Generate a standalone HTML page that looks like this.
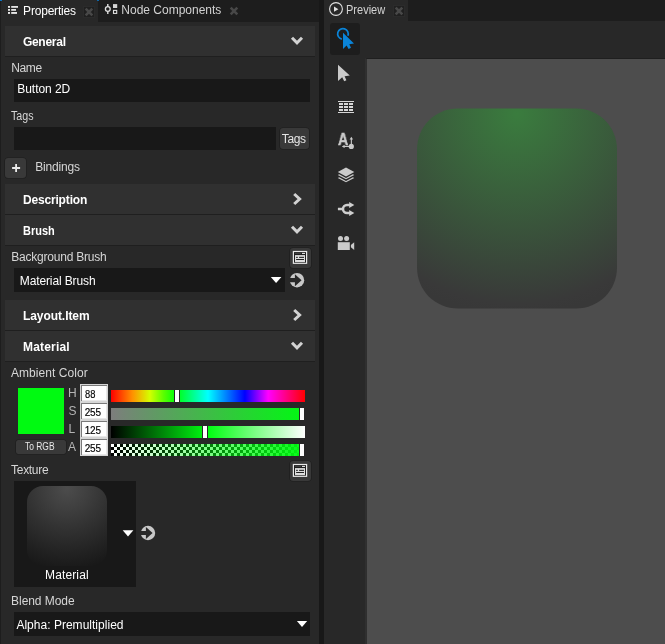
<!DOCTYPE html>
<html><head><meta charset="utf-8"><title>Properties</title>
<style>
html,body{margin:0;padding:0}
body{width:665px;height:644px;overflow:hidden;background:#282828;position:relative;font-family:"Liberation Sans",sans-serif}
.a{position:absolute}
.t{position:absolute;white-space:pre;font-family:"Liberation Sans",sans-serif}
.hdr{position:absolute;left:5px;width:310px;height:30px;background:#303030}
.ln{position:absolute;left:5px;width:310px;height:1px;background:#1f1f1f}
.inp{position:absolute;background:#181818}
.btn{position:absolute;background:#393939;border-radius:3px;box-shadow:0 0 0 0.6px rgba(20,20,20,.55)}
.num{position:absolute;left:80px;width:28px;height:18px;box-sizing:border-box;background:#fff;border:1px solid #d6d6d6;box-shadow:inset 1px 1px 0 #7a7a7a, inset -1px -1px 0 #e8e8e8}
.bar{position:absolute;left:111px;width:194px;height:12px}
.th{position:absolute;width:4px;height:12px;background:#fff;border-left:1px solid #282828;border-right:1px solid #282828}
svg{position:absolute;left:0;top:0}
.n{-webkit-text-stroke:0.15px #000}

</style></head>
<body>
<!-- left panel -->
<div class="a" style="left:0;top:0;width:319px;height:22px;background:#1d1d1d"></div>
<div class="a" style="left:0;top:0;width:98px;height:22px;background:#282828"></div>
<div class="a" style="left:0;top:0;width:1px;height:644px;background:#1d1d1d"></div>
<div class="a" style="left:84.1px;top:7px;width:10px;height:9.7px;background:#202020;box-shadow:0 0 0 1px #2b2b2b"></div>
<div class="a" style="left:0;top:0;width:2.2px;height:0.8px;background:#0b72c0"></div>
<div class="a" style="left:97.4px;top:0;width:1.7px;height:1px;background:#0b72c0;opacity:.85"></div>
<!-- divider -->
<div class="a" style="left:319px;top:0;width:5px;height:644px;background:#181818"></div>
<!-- preview panel -->
<div class="a" style="left:324px;top:0;width:341px;height:21px;background:#1d1d1d"></div>
<div class="a" style="left:324px;top:0;width:84px;height:21px;background:#282828"></div>
<div class="a" style="left:394.1px;top:6px;width:10px;height:9.7px;background:#202020;box-shadow:0 0 0 1px #2b2b2b"></div>
<div class="a" style="left:330px;top:23px;width:30px;height:32px;background:#1d1d1d;border-radius:3px"></div>
<div class="a" style="left:365px;top:58px;width:300px;height:586px;background:#4d4d4d;border-left:2px solid #2f2f2f;border-top:1px solid #1f1f1f;box-sizing:border-box"></div>

<!-- section headers -->
<div class="hdr" style="top:26px"></div><div class="ln" style="top:56px"></div>
<div class="hdr" style="top:184px"></div><div class="ln" style="top:214px"></div>
<div class="hdr" style="top:215px"></div><div class="ln" style="top:245px"></div>
<div class="hdr" style="top:300px"></div><div class="ln" style="top:330px"></div>
<div class="hdr" style="top:331px"></div><div class="ln" style="top:361px"></div>

<!-- general -->
<div class="inp" style="left:14px;top:79px;width:296px;height:23px"></div>
<div class="inp" style="left:14px;top:127px;width:262px;height:23px"></div>
<div class="btn" style="left:280px;top:127.9px;width:29.1px;height:21.5px"></div>
<div class="btn" style="left:5.4px;top:157.7px;width:21px;height:20.7px"></div>

<!-- brush -->
<div class="btn" style="left:289.8px;top:248px;width:21.4px;height:20px"></div>
<div class="inp" style="left:14px;top:268px;width:271px;height:24px"></div>

<!-- material -->
<div class="a" style="left:18px;top:388px;width:46px;height:46px;background:#00fa11"></div>
<div class="btn" style="left:15.8px;top:439.8px;width:50.3px;height:14.2px;border-radius:2.5px"></div>
<div class="num" style="top:384px"></div>
<div class="num" style="top:402px"></div>
<div class="num" style="top:420px"></div>
<div class="num" style="top:438px"></div>
<div class="bar" style="top:390px;background:linear-gradient(to right,#f00 0%,#ff9000 11%,#d4ff00 20%,#5cff00 27%,#00ff0c 33.5%,#0ff 50%,#00f 69%,#f0f 81%,#f00 100%)"></div>
<div class="bar" style="top:408px;background:linear-gradient(to right,#7d7d7d,#00fa11)"></div>
<div class="bar" style="top:426px;background:linear-gradient(to right,#000 0%,#00ff11 50%,#fff 100%)"></div>
<div class="bar" style="top:444px;background:linear-gradient(to right,rgba(0,250,17,0),rgba(0,250,17,1)),conic-gradient(#000 25%,#fff 0 50%,#000 0 75%,#fff 0) 0 0/6px 6px"></div>
<div class="th" style="left:174px;top:390px"></div>
<div class="th" style="left:299px;top:408px"></div>
<div class="th" style="left:202px;top:426px"></div>
<div class="th" style="left:299px;top:444px"></div>

<!-- texture -->
<div class="btn" style="left:289.8px;top:460.8px;width:21.4px;height:20.4px"></div>
<div class="inp" style="left:14px;top:481px;width:122px;height:106px"></div>
<div class="a" style="left:27px;top:486px;width:80px;height:80px;border-radius:16px;background:radial-gradient(circle 84px at 50% 3%, #4c4c4c 0%, #3f3f3f 25%, #313131 50%, #222222 78%, #171717 100%)"></div>
<div class="inp" style="left:14px;top:612px;width:296px;height:24px"></div>

<span id="bigA" class="t" style="left:337.9px;top:129px;font-size:17px;line-height:22px;font-weight:700;color:#cccccc;will-change:transform;transform:scaleX(0.83);transform-origin:0 0;-webkit-text-stroke:0.5px #cccccc">A</span>

<svg width="665" height="644" viewBox="0 0 665 644">
<defs><radialGradient id="bg" gradientUnits="userSpaceOnUse" cx="517" cy="114" r="200">
<stop offset="0" stop-color="#3a7c3e"/><stop offset="0.95" stop-color="#393939"/><stop offset="1" stop-color="#383838"/></radialGradient></defs>
<path d="M417 149.6C417 126.6 435.0 108.6 458.0 108.6H576.0C599.0 108.6 617 126.6 617 149.6V267.6C617 290.6 599.0 308.6 576.0 308.6H458.0C435.0 308.6 417 290.6 417 267.6Z" fill="url(#bg)"/>
<!-- properties tab icon -->
<g fill="#e6e6e6">
<rect x="8" y="6" width="2" height="1.8"/><rect x="11.2" y="6" width="6.8" height="1.8"/>
<rect x="8" y="9" width="2" height="1.8"/><rect x="11.2" y="9" width="4.8" height="1.8"/>
<rect x="8" y="12" width="2" height="1.9"/><rect x="11.2" y="12" width="5.8" height="1.9"/>
</g>
<!-- close X's -->
<g stroke="#484848" stroke-width="2.6" fill="none">
<path d="M85.7 8.7L92.3 15.3M92.3 8.7L85.7 15.3"/>
<path d="M230.7 7.7L237.3 14.3M237.3 7.7L230.7 14.3"/>
<path d="M395.7 7.7L402.3 14.3M402.3 7.7L395.7 14.3"/>
</g>
<!-- node components icon -->
<g fill="none" stroke="#e0e0e0">
<circle cx="107.8" cy="9" r="2.4" stroke-width="1.3"/>
<path d="M107.8 4.1V6.4M107.8 11.6V13.9" stroke-width="1.4"/>
<rect x="113.5" y="10.4" width="3.2" height="3" stroke-width="1.1"/>
</g>
<rect x="113" y="4.1" width="4.2" height="3.9" fill="#d4d4d4"/>
<!-- preview play icon -->
<circle cx="336" cy="9" r="6.4" fill="none" stroke="#e0e0e0" stroke-width="1.1"/>
<path d="M334 6.6L338.4 9.2L334 11.8Z" fill="#e0e0e0"/>
<!-- toolbar: interact tool (blue) -->
<path d="M341.8 39.1A5.3 5.3 0 1 1 347.9 35.8" fill="none" stroke="#0a84d8" stroke-width="1.7"/>
<path d="M343 32.8L354 43.6L349.3 44.3L351 47.8L348.6 48.9L346.6 45.4L343 49Z" fill="#0a84d8"/>
<!-- toolbar: arrow -->
<path d="M338 64.8L349.8 75.5L344.6 76.2L346.4 80.2L344.2 81.2L342.2 77.2L338 81Z" fill="#cacaca"/>
<!-- toolbar: grid -->
<g fill="#d6d6d6">
<rect x="338" y="101" width="16" height="1"/><rect x="338" y="112" width="16" height="1"/>
<rect x="339" y="103" width="4" height="2"/><rect x="344" y="103" width="4" height="2"/><rect x="349" y="103" width="4" height="2"/>
<rect x="339" y="106" width="4" height="2"/><rect x="344" y="106" width="4" height="2"/><rect x="349" y="106" width="4" height="2"/>
<rect x="339" y="109" width="4" height="2"/><rect x="344" y="109" width="4" height="2"/><rect x="349" y="109" width="4" height="2"/>
</g>
<!-- toolbar: A with arrows -->

<g fill="#cacaca">
<circle cx="351.3" cy="146.4" r="2.6"/>
<rect x="350.8" y="139" width="1.1" height="6"/>
<path d="M351.35 136.8L353.1 139.5H349.6Z"/>
<rect x="344" y="145.9" width="6" height="1.1"/>
<path d="M341.8 146.45L344.6 144.8V148.1Z"/>
</g>
<!-- toolbar: layers -->
<g fill="#cacaca">
<path d="M346 167.6L354.3 172L346 176.5L337.8 172Z"/>
<path d="M337.8 174.9L339.2 174.2L346 177.9L352.8 174.2L354.3 174.9L346 179.3Z"/>
<path d="M337.8 177.9L339.2 177.2L346 180.9L352.8 177.2L354.3 177.9L346 182.3Z"/>
</g>
<!-- toolbar: split arrows -->
<g fill="none" stroke="#cecece" stroke-width="2.5">
<path d="M337.9 209H342.5"/>
<path d="M350 205H347A4 4 0 0 0 347 213H350"/>
</g>
<path d="M349.2 202.1L354.3 205L349.2 207.9Z" fill="#cecece"/>
<path d="M349.2 210.1L354.3 213L349.2 215.9Z" fill="#cecece"/>
<!-- toolbar: camera -->
<g fill="#cacaca">
<rect x="337.8" y="242.2" width="12" height="7.8"/>
<circle cx="340.5" cy="238.5" r="2.5"/><circle cx="346.6" cy="238.5" r="2.5"/>
<path d="M350.9 245L354.2 242.2V250L350.9 247.2Z"/>
</g>
<!-- chevrons -->
<g fill="none" stroke="#d2d2d2" stroke-width="3">
<path d="M292 37.8L297 42.8L302 37.8"/>
<path d="M294.2 194L299.6 199L294.2 204"/>
<path d="M292 226.8L297 231.8L302 226.8"/>
<path d="M294.2 310L299.6 315L294.2 320"/>
<path d="M292 342.8L297 347.8L302 342.8"/>
</g>
<!-- plus -->
<path d="M12.1 168H20.1M16.1 164V172" stroke="#ececec" stroke-width="1.8" fill="none"/>
<!-- window icons -->
<g id="win">
<rect x="293.4" y="251.5" width="13.2" height="11.8" fill="#1f1f1f" stroke="#e8e8e8" stroke-width="1.2"/>
<rect x="295" y="255.1" width="10" height="7" fill="#dedede"/>
<rect x="302" y="252.9" width="3" height="1" fill="#f2f2f2"/>
<rect x="295" y="253.1" width="6.2" height="0.6" fill="#555"/>
<rect x="296.1" y="256.8" width="1.7" height="1.1" fill="#222"/>
<rect x="299.1" y="256.8" width="4.9" height="1.1" fill="#222"/>
<rect x="296.1" y="259" width="7.9" height="1" fill="#222"/>
</g>
<use href="#win" y="213"/>
<!-- circle arrows -->
<g id="carr">
<circle cx="297" cy="280.2" r="7.2" fill="#c8c8c8"/>
<path d="M289 278.1H294.9V274.2L301.6 280.2L294.9 286.2V282.3H289Z" fill="#282828"/>
</g>
<use href="#carr" x="-149" y="252.8"/>
<!-- dropdown triangles -->
<g fill="#ffffff">
<path d="M270.8 277H281.4L276.1 283.1Z"/>
<path d="M122.7 530.3H133.4L128 536.4Z"/>
<path d="M296.9 621H307.2L302 627Z"/>
</g>
</svg>

<span class="t" style="left:23.1px;top:4px;font-size:12px;line-height:14px;font-weight:400;color:#ffffff;letter-spacing:-0.2px">Properties</span>
<span class="t" style="left:121.3px;top:3px;font-size:12px;line-height:14px;font-weight:400;color:#d2d2d2;letter-spacing:-0.0px">Node Components</span>
<span class="t" style="left:346.4px;top:3px;font-size:12px;line-height:14px;font-weight:400;color:#d2d2d2;transform:scaleX(0.9183);transform-origin:0 0">Preview</span>
<span class="t" style="left:22.9px;top:35px;font-size:12px;line-height:14px;font-weight:700;color:#ffffff;letter-spacing:-0.27px">General</span>
<span class="t" style="left:11.3px;top:61px;font-size:12px;line-height:14px;font-weight:400;color:#d6d6d6;letter-spacing:-0.41px">Name</span>
<span class="t" style="left:17.3px;top:82px;font-size:12px;line-height:14px;font-weight:400;color:#ffffff;letter-spacing:-0.05px">Button 2D</span>
<span class="t" style="left:11.3px;top:109px;font-size:12px;line-height:14px;font-weight:400;color:#d6d6d6;transform:scaleX(0.8912);transform-origin:0 0">Tags</span>
<span class="t" style="left:281.8px;top:132px;font-size:12px;line-height:14px;font-weight:400;color:#e4e4e4;letter-spacing:-0.35px">Tags</span>
<span class="t" style="left:35.3px;top:160px;font-size:12px;line-height:14px;font-weight:400;color:#d6d6d6;letter-spacing:-0.19px">Bindings</span>
<span class="t" style="left:22.9px;top:193px;font-size:12px;line-height:14px;font-weight:700;color:#ffffff;letter-spacing:-0.16px">Description</span>
<span class="t" style="left:22.9px;top:224px;font-size:12px;line-height:14px;font-weight:700;color:#ffffff;transform:scaleX(0.9143);transform-origin:0 0">Brush</span>
<span class="t" style="left:11.2px;top:250px;font-size:12px;line-height:14px;font-weight:400;color:#d6d6d6;letter-spacing:-0.21px">Background Brush</span>
<span class="t" style="left:19.8px;top:274px;font-size:12px;line-height:14px;font-weight:400;color:#ffffff;letter-spacing:-0.12px">Material Brush</span>
<span class="t" style="left:22.9px;top:309px;font-size:12px;line-height:14px;font-weight:700;color:#ffffff;letter-spacing:-0.06px">Layout.Item</span>
<span class="t" style="left:23.1px;top:340px;font-size:12px;line-height:14px;font-weight:700;color:#ffffff;letter-spacing:0.16px">Material</span>
<span class="t" style="left:10.9px;top:366px;font-size:12px;line-height:14px;font-weight:400;color:#d6d6d6;letter-spacing:0.06px">Ambient Color</span>
<span class="t" style="left:68.1px;top:386px;font-size:12px;line-height:14px;font-weight:400;color:#b4b4b4;letter-spacing:0px">H</span>
<span class="t" style="left:68.4px;top:404px;font-size:12px;line-height:14px;font-weight:400;color:#b4b4b4;letter-spacing:0px">S</span>
<span class="t" style="left:68.6px;top:422px;font-size:12px;line-height:14px;font-weight:400;color:#b4b4b4;letter-spacing:0px">L</span>
<span class="t" style="left:67.9px;top:440px;font-size:12px;line-height:14px;font-weight:400;color:#b4b4b4;letter-spacing:0px">A</span>
<span class="t n" style="left:84.8px;top:389px;font-size:10px;line-height:12px;font-weight:400;color:#000000;transform:scaleX(0.9348);transform-origin:0 0">88</span>
<span class="t n" style="left:84.8px;top:407px;font-size:10px;line-height:12px;font-weight:400;color:#000000;letter-spacing:-0.24px">255</span>
<span class="t n" style="left:84.8px;top:425px;font-size:10px;line-height:12px;font-weight:400;color:#000000;letter-spacing:-0.24px">125</span>
<span class="t n" style="left:84.8px;top:443px;font-size:10px;line-height:12px;font-weight:400;color:#000000;letter-spacing:-0.24px">255</span>
<span class="t" style="left:25.4px;top:441px;font-size:10px;line-height:12px;font-weight:400;color:#e8e8e8;transform:scaleX(0.8425);transform-origin:0 0">To RGB</span>
<span class="t" style="left:11.1px;top:463px;font-size:12px;line-height:14px;font-weight:400;color:#d6d6d6;letter-spacing:-0.31px">Texture</span>
<span class="t" style="left:45.1px;top:568px;font-size:12px;line-height:14px;font-weight:400;color:#ffffff;letter-spacing:0.12px">Material</span>
<span class="t" style="left:11.1px;top:594px;font-size:12px;line-height:14px;font-weight:400;color:#d6d6d6;letter-spacing:-0.06px">Blend Mode</span>
<span class="t" style="left:16.4px;top:618px;font-size:12px;line-height:14px;font-weight:400;color:#ffffff;letter-spacing:0.02px">Alpha: Premultiplied</span>
</body></html>
